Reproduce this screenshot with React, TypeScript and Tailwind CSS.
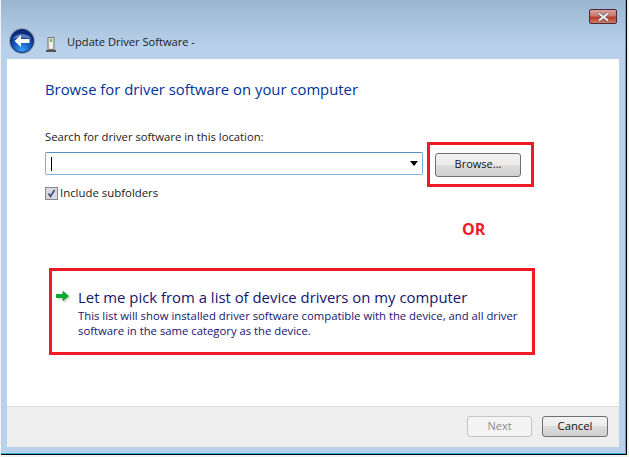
function BackButton() {
    return (
        <svg width="26" height="26" viewBox="0 0 26 26">
            <defs>
                <radialGradient id="orb" cx="50%" cy="90%" r="80%">
                    <stop offset="0%" stopColor="#35a4f4" />
                    <stop offset="55%" stopColor="#1450b8" />
                    <stop offset="100%" stopColor="#0a2a78" />
                </radialGradient>
            </defs>
            <circle cx="13" cy="13" r="13" fill="#8fa6c4" />
            <circle cx="13" cy="13" r="11.5" fill="url(#orb)" stroke="#0b2a66" strokeWidth="1" />
            <path d="M4 11c2-6.5 16-6.5 18 0-5-2-13-2-18 0z" fill="#ffffff" opacity="0.35" />
            <path d="M5.5 13l6.5-6v4h8.5v4H12v4z" fill="#ffffff" />
        </svg>
    );
}

function DeviceIcon() {
    return (
        <svg width="12" height="16" viewBox="0 0 12 16">
            <rect x="3" y="0.5" width="6" height="12" fill="#e4e4dc" stroke="#77776f" />
            <rect x="5" y="2" width="2" height="3" fill="#5cc04a" />
            <rect x="5" y="5" width="2" height="6" fill="#fafaf6" />
            <rect x="1" y="13" width="10" height="2" fill="#55554f" />
        </svg>
    );
}

function CloseButton() {
    return (
        <div className="w-[28px] h-[15px] flex items-center justify-center rounded-[2px] border border-[#4a2a3a] bg-[linear-gradient(#d8a098_0%,#c87a6c_45%,#b83a22_55%,#d07a68_100%)]">
            <svg width="13" height="10" viewBox="0 0 13 10">
                <path d="M2 1.5l9 7M11 1.5l-9 7" stroke="#5a5a68" strokeWidth="3.4" />
                <path d="M2 1.5l9 7M11 1.5l-9 7" stroke="#f0f0f4" strokeWidth="2" />
            </svg>
        </div>
    );
}

function GreenArrow() {
    return (
        <svg width="15" height="14" viewBox="0 0 15 14">
            <path d="M1 4.5h6V1l6.5 5.5L7 12V8.5H1z" fill="#d8d8d0" transform="translate(1 1)" />
            <path d="M0 4h6.5V0.5l6.5 5.5-6.5 5.5V8H0z" fill="#10a82c" />
        </svg>
    );
}

export default function App() {
    return (
        <div className="w-[629px] h-[457px] bg-[#f2f2f2] font-['Open_Sans',sans-serif] overflow-hidden">
            <div className="w-[626px] h-[455px] ml-px border-r border-b border-black bg-[linear-gradient(#9db6cf_0px,#b9d1ea_48px)] shadow-[inset_-1px_-1px_0_#2bb5e0] flex flex-col pl-[6px] pr-[7px] pb-[7px]">
                <div className="h-[59px] shrink-0 relative flex items-end pb-[5px] pl-[2px]">
                    <div className="absolute right-[2px] top-[9px]">
                        <CloseButton />
                    </div>
                    <BackButton />
                    <div className="ml-[10px] mb-[1px]">
                        <DeviceIcon />
                    </div>
                    <span className="ml-[10px] mb-[4px] text-[11.1px] leading-[16px] text-[#1c1c1c]">Update Driver Software -</span>
                </div>

                <div className="flex-1 bg-white flex flex-col min-h-0">
                    <div className="flex-1 pl-[38px] pt-[20px]">
                        <h1 className="text-[14.85px] leading-[20px] font-normal text-[#003399]">Browse for driver software on your computer</h1>
                        <p className="mt-[30px] text-[11.25px] leading-[16px] text-[#1a1a1a]">Search for driver software in this location:</p>
                        <div className="flex items-start mt-[-3px]">
                            <div className="mt-[10px]">
                                <div className="w-[378px] h-[23px] border border-[#7fb0d8] rounded-[2px] border-t-[#4f8fc4] flex items-center pl-[5px] pr-[4px]">
                                    <div className="w-px h-[14px] bg-black" />
                                    <div className="ml-auto w-0 h-0 border-l-[4px] border-r-[4px] border-t-[5px] border-l-transparent border-r-transparent border-t-black" />
                                </div>
                                <label className="flex items-center mt-[10px]">
                                    <span className="w-[13px] h-[13px] border border-[#8a8a8a] bg-[#d8d8e0] flex items-center justify-center">
                                        <svg width="9" height="9" viewBox="0 0 9 9">
                                            <path d="M1.5 4.5L3.5 7.5 7.5 1" fill="none" stroke="#44507e" strokeWidth="1.7" />
                                        </svg>
                                    </span>
                                    <span className="ml-[2px] text-[11.4px] leading-[16px] text-[#1a1a1a]">Include subfolders</span>
                                </label>
                            </div>
                            <div className="ml-[4px] w-[107px] h-[45px] border-[3px] border-[#ed1c24] flex items-center pl-[5px]">
                                <button className="w-[86px] h-[24px] border border-[#707070] rounded-[3px] bg-[linear-gradient(#f2f2f2_0%,#ebebeb_50%,#dddddd_50%,#cfcfcf_100%)] text-[11px] text-[#111111]">Browse...</button>
                            </div>
                        </div>
                        <div className="mt-[17px] pl-[417px] text-[16px] leading-[22px] font-bold text-[#ed1c24]">OR</div>
                        <div className="mt-[28px] ml-[4px] w-[486px] h-[87px] border-[3px] border-[#ed1c24] pl-[4px] pr-[8px] pt-[17px] flex items-start">
                            <div className="mt-[2px] shrink-0">
                                <GreenArrow />
                            </div>
                            <div className="ml-[7px] text-[#14146e]">
                                <div className="text-[14.9px] leading-[20px] mt-[-1px]">Let me pick from a list of device drivers on my computer</div>
                                <p className="text-[11.3px] leading-[15px] mt-[1px]">This list will show installed driver software compatible with the device, and all driver software in the same category as the device.</p>
                            </div>
                        </div>
                    </div>
                    <div className="h-[41px] shrink-0 bg-[#eeeeee] border-t border-[#dcdcdc] flex items-center justify-end gap-[10px] pr-[11px] pb-[1px]">
                        <button className="w-[65px] h-[21px] border border-[#c4c4c4] rounded-[3px] bg-[#f4f4f4] text-[11px] text-[#8a8a8a]">Next</button>
                        <button className="w-[66px] h-[21px] border border-[#707070] rounded-[3px] bg-[linear-gradient(#f2f2f2_0%,#ebebeb_50%,#dddddd_50%,#cfcfcf_100%)] text-[11.3px] text-[#111111]">Cancel</button>
                    </div>
                </div>
            </div>
        </div>
    );
}
